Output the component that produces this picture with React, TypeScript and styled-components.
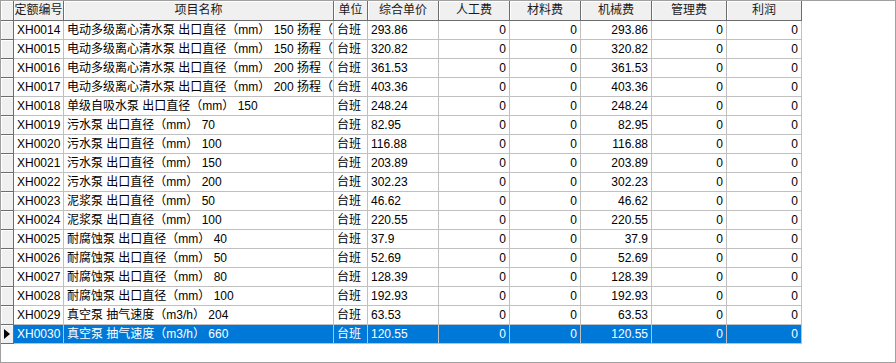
import styled, { createGlobalStyle } from "styled-components";

type TRow = {
  code: string;
  name: string;
  unit: string;
  price: string;
  labor: string;
  material: string;
  machine: string;
  manage: string;
  profit: string;
};

const COLS = "13px 50px 270px 34px 71px 71px 71px 71px 75px 75px";

const mk = (code: string, name: string, price: string): TRow => ({
  code,
  name,
  unit: "台班",
  price,
  labor: "0",
  material: "0",
  machine: price,
  manage: "0",
  profit: "0",
});

const pump = "电动多级离心清水泵 出口直径（mm） ";
const rows: TRow[] = [
  mk("XH0014", pump + "150 扬程（m） 50以下", "293.86"),
  mk("XH0015", pump + "150 扬程（m） 100以下", "320.82"),
  mk("XH0016", pump + "200 扬程（m） 50以下", "361.53"),
  mk("XH0017", pump + "200 扬程（m） 100以下", "403.36"),
  mk("XH0018", "单级自吸水泵 出口直径（mm） 150", "248.24"),
  mk("XH0019", "污水泵 出口直径（mm） 70", "82.95"),
  mk("XH0020", "污水泵 出口直径（mm） 100", "116.88"),
  mk("XH0021", "污水泵 出口直径（mm） 150", "203.89"),
  mk("XH0022", "污水泵 出口直径（mm） 200", "302.23"),
  mk("XH0023", "泥浆泵 出口直径（mm） 50", "46.62"),
  mk("XH0024", "泥浆泵 出口直径（mm） 100", "220.55"),
  mk("XH0025", "耐腐蚀泵 出口直径（mm） 40", "37.9"),
  mk("XH0026", "耐腐蚀泵 出口直径（mm） 50", "52.69"),
  mk("XH0027", "耐腐蚀泵 出口直径（mm） 80", "128.39"),
  mk("XH0028", "耐腐蚀泵 出口直径（mm） 100", "192.93"),
  mk("XH0029", "真空泵 抽气速度（m3/h） 204", "63.53"),
  mk("XH0030", "真空泵 抽气速度（m3/h） 660", "120.55"),
];

const headers = ["定额编号", "项目名称", "单位", "综合单价", "人工费", "材料费", "机械费", "管理费", "利润"];

export default function App() {
  const selected = rows.length - 1;
  return (
    <>
      <Global />
      <Frame>
        <HeadRow>
          <Corner />
          {headers.map((h) => (
            <HeadCell key={h}>{h}</HeadCell>
          ))}
        </HeadRow>
        {rows.map((r, i) => {
          const sel = i === selected;
          return (
            <Row key={r.code}>
              <Indicator>{sel && <Arrow />}</Indicator>
              <Cell $sel={sel}>{r.code}</Cell>
              <Cell $sel={sel}>{r.name}</Cell>
              <Cell $sel={sel}>{r.unit}</Cell>
              <Cell $sel={sel}>{r.price}</Cell>
              <Cell $sel={sel} $right>{r.labor}</Cell>
              <Cell $sel={sel} $right>{r.material}</Cell>
              <Cell $sel={sel} $right>{r.machine}</Cell>
              <Cell $sel={sel} $right>{r.manage}</Cell>
              <Cell $sel={sel} $right>{r.profit}</Cell>
            </Row>
          );
        })}
      </Frame>
    </>
  );
}

const Global = createGlobalStyle`
  html, body {
    margin: 0;
    padding: 0;
    background: #fff;
  }
  body {
    font-family: "Liberation Sans", "Noto Sans CJK SC", sans-serif;
    font-size: 12px;
    color: #000;
  }
`;

const Frame = styled.div`
  box-sizing: border-box;
  width: 896px;
  height: 363px;
  border: 1px solid #a0a0a0;
  background: #fff;
  overflow: hidden;
`;

const HeadRow = styled.div`
  display: grid;
  grid-template-columns: ${COLS};
  width: 801px;
  height: 20px;
`;

const Row = styled.div`
  display: grid;
  grid-template-columns: ${COLS};
  width: 801px;
  height: 19px;
`;

const Corner = styled.div`
  box-sizing: border-box;
  background: #f0f0f0;
  border-right: 1px solid #6d6d6d;
  border-bottom: 1px solid #6d6d6d;
  box-shadow: inset 1px 1px 0 #fff;
`;

const HeadCell = styled.div`
  box-sizing: border-box;
  background: #f0f0f0;
  border-right: 1px solid #6d6d6d;
  border-bottom: 1px solid #6d6d6d;
  box-shadow: inset 1px 1px 0 #fff;
  color: #1a1a1a;
  text-align: center;
  line-height: 19px;
  white-space: nowrap;
  overflow: hidden;
`;

const Indicator = styled.div`
  box-sizing: border-box;
  position: relative;
  background: #f0f0f0;
  border-right: 1px solid #6d6d6d;
  border-bottom: 1px solid #6d6d6d;
  box-shadow: inset 1px 1px 0 #fff;
`;

const Arrow = styled.span`
  position: absolute;
  left: 3px;
  top: 4px;
  width: 0;
  height: 0;
  border-left: 6px solid #000;
  border-top: 5px solid transparent;
  border-bottom: 5px solid transparent;
`;

const Cell = styled.div<{ $sel?: boolean; $right?: boolean }>`
  box-sizing: border-box;
  border-right: 1px solid #c0c0c0;
  border-bottom: 1px solid #c0c0c0;
  background: ${(p) => (p.$sel ? "#0078d7" : "#fff")};
  color: ${(p) => (p.$sel ? "#fff" : "#000")};
  padding: 0 3px;
  line-height: 18px;
  text-align: ${(p) => (p.$right ? "right" : "left")};
  white-space: nowrap;
  overflow: hidden;
`;
